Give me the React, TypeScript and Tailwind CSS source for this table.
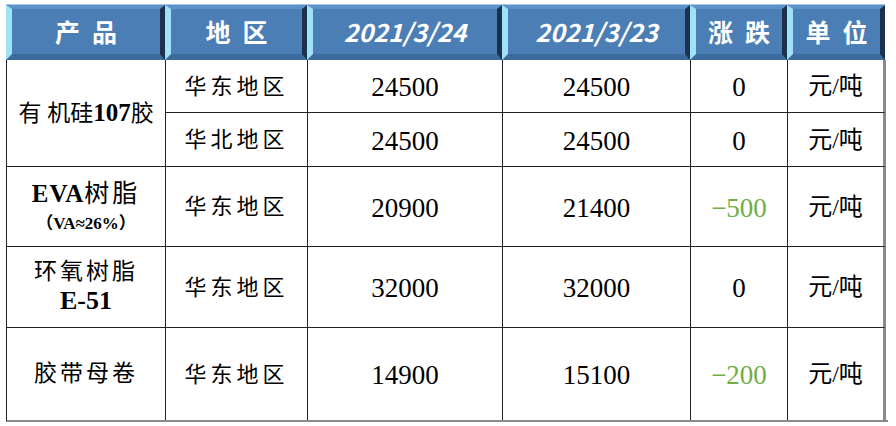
import React from "react";

const serif = { fontFamily: '"Liberation Serif", "Noto Sans CJK SC", serif' };
const head = { fontFamily: '"Noto Sans CJK SC", "Liberation Sans", sans-serif' };

function H({ children, italic }: { children: React.ReactNode; italic?: boolean }) {
  return (
    <div className="h-[56px] border-t border-t-[#a7c6e4]">
      <div
        className="h-full flex items-center justify-center border-l-[6px] border-l-[#9fe2f8] border-t-[4px] border-t-[#5c92c8] border-r-[5px] border-r-[#1d314c] border-b-[6px] border-b-[#3c6a9a] bg-[#4b7eb5] text-white font-bold"
        style={head}
      >
        <span
          className={
            italic
              ? "text-[25px] italic tracking-[0px]"
              : "text-[25px] tracking-[12px] pl-[12px]"
          }
        >
          {children}
        </span>
      </div>
    </div>
  );
}

const cell = "border-r border-b border-[#222] flex items-center justify-center";
const num = "text-[27px] text-black pt-[3px]";
const cn = "text-[22px] tracking-[4px] text-black";
const unit = "text-[24px] text-black border-r-[3px] border-r-[#8a8a8a]";
const neg = "text-[27px] text-[#70ad47] pt-[3px]";

export default function App() {
  return (
    <div className="w-[896px] h-[426px] bg-white pt-[4px] pl-[6px]" style={serif}>
      <div className="w-[882px]">
        <div className="grid grid-cols-[159px_142px_195px_188px_97px_98px]">
          <H>产品</H>
          <H>地区</H>
          <H italic>2021/3/24</H>
          <H italic>2021/3/23</H>
          <H>涨跌</H>
          <H>单位</H>
        </div>
        <div className="grid grid-cols-[159px_142px_195px_188px_97px_98px] grid-rows-[53px_54px_80px_81px_92px] border-l border-[#222] border-b-2 border-b-[#8a8a8a]">
          <div className={`${cell} row-span-2 text-[23px] text-black`}>
            <span>
              有 机硅<b className="text-[25px]">107</b>胶
            </span>
          </div>
          <div className={`${cell} ${cn}`}>华东地区</div>
          <div className={`${cell} ${num}`}>24500</div>
          <div className={`${cell} ${num}`}>24500</div>
          <div className={`${cell} ${num}`}>0</div>
          <div className={`${cell} ${unit}`}>元/吨</div>

          <div className={`${cell} ${cn}`}>华北地区</div>
          <div className={`${cell} ${num}`}>24500</div>
          <div className={`${cell} ${num}`}>24500</div>
          <div className={`${cell} ${num}`}>0</div>
          <div className={`${cell} ${unit}`}>元/吨</div>

          <div className={`${cell} flex-col leading-none text-black`}>
            <span className="text-[25px] font-bold tracking-[1px]">
              EVA<span className="font-normal tracking-[3px]">树脂</span>
            </span>
            <span className="text-[17px] font-bold mt-[9px]">（VA≈26%）</span>
          </div>
          <div className={`${cell} ${cn}`}>华东地区</div>
          <div className={`${cell} ${num}`}>20900</div>
          <div className={`${cell} ${num}`}>21400</div>
          <div className={`${cell} ${neg}`}>−500</div>
          <div className={`${cell} ${unit}`}>元/吨</div>

          <div className={`${cell} flex-col leading-none text-black`}>
            <span className="text-[23px] tracking-[3px]">环氧树脂</span>
            <span className="text-[26px] font-bold mt-[5px]">E-51</span>
          </div>
          <div className={`${cell} ${cn}`}>华东地区</div>
          <div className={`${cell} ${num}`}>32000</div>
          <div className={`${cell} ${num}`}>32000</div>
          <div className={`${cell} ${num}`}>0</div>
          <div className={`${cell} ${unit}`}>元/吨</div>

          <div className={`${cell} text-[23px] tracking-[3px] text-black border-b-0`}>胶带母卷</div>
          <div className={`${cell} ${cn} border-b-0`}>华东地区</div>
          <div className={`${cell} ${num} border-b-0`}>14900</div>
          <div className={`${cell} ${num} border-b-0`}>15100</div>
          <div className={`${cell} ${neg} border-b-0`}>−200</div>
          <div className={`${cell} ${unit} border-b-0`}>元/吨</div>
        </div>
      </div>
    </div>
  );
}
